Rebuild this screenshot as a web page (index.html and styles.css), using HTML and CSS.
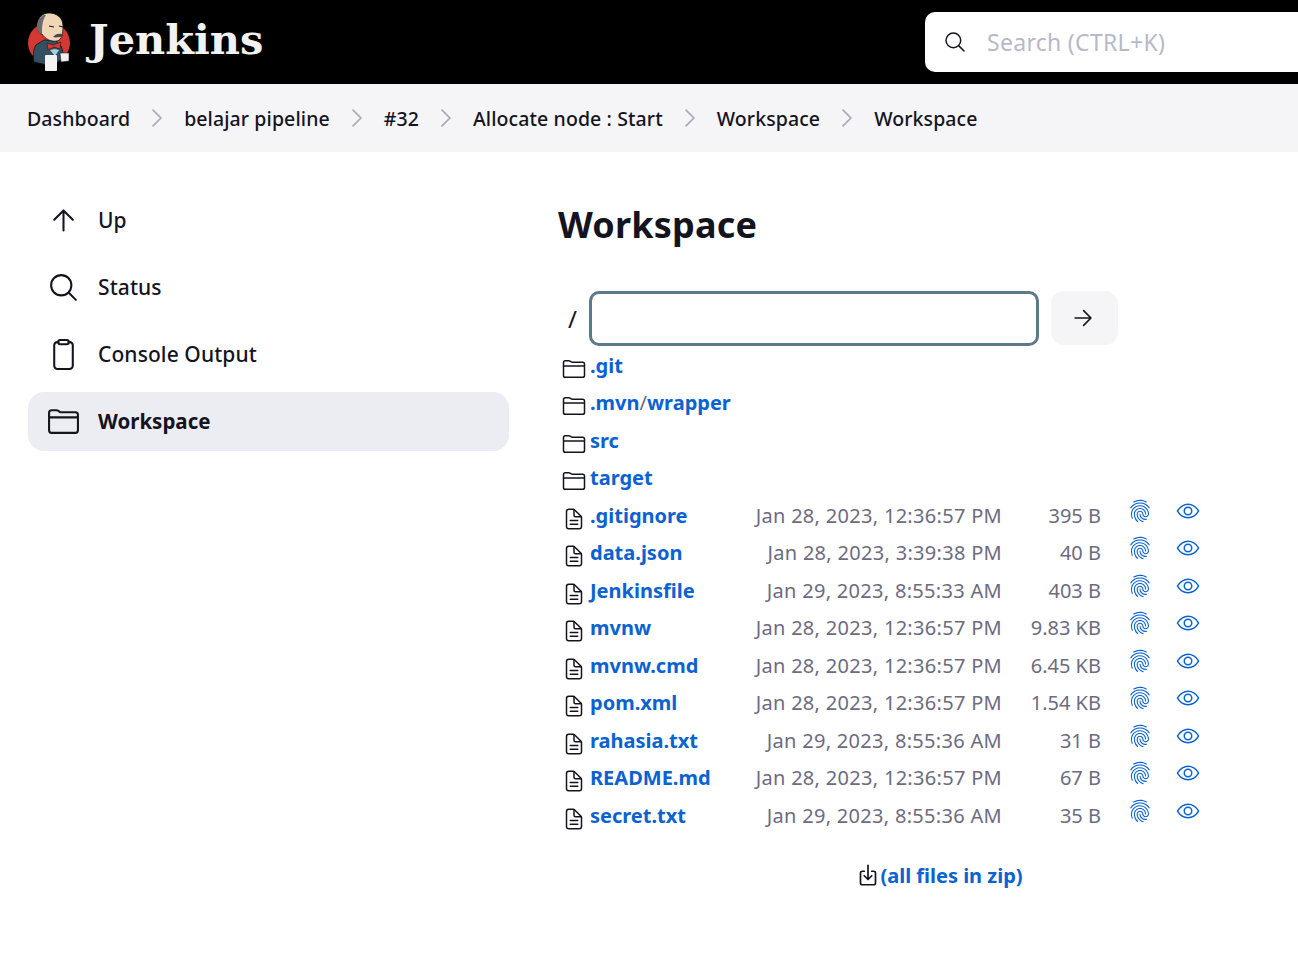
FILE: index.html
```html
<!DOCTYPE html>
<html lang="en">
<head>
    <meta charset="UTF-8">
    <meta name="viewport" content="width=device-width, initial-scale=1.0">
    <link rel="stylesheet" href="styles.css">
    <title>Workspace [Jenkins]</title>
</head>
<body>
    <svg class="sprite" xmlns="http://www.w3.org/2000/svg">
        <symbol id="i-folder" viewBox="0 0 512 512"><path d="M440 432H72a40 40 0 01-40-40V120a40 40 0 0140-40h75.89a40 40 0 0122.19 6.72l27.84 18.56a40 40 0 0022.19 6.72H440a40 40 0 0140 40v240a40 40 0 01-40 40zM32 192h448"/></symbol>
        <symbol id="i-doc" viewBox="0 0 512 512"><path d="M416 221.25V416a48 48 0 01-48 48H144a48 48 0 01-48-48V96a48 48 0 0148-48h98.75a32 32 0 0122.62 9.37l141.26 141.26a32 32 0 019.37 22.62z"/><path d="M256 56v120a32 32 0 0032 32h120M176 288h160M176 368h160"/></symbol>
        <symbol id="i-up" viewBox="0 0 512 512"><path d="M112 244l144-144 144 144M256 120v292"/></symbol>
        <symbol id="i-forward" viewBox="0 0 512 512"><path d="M268 112l144 144-144 144M392 256H100"/></symbol>
        <symbol id="i-search" viewBox="0 0 512 512"><path d="M221.09 64a157.09 157.09 0 10157.09 157.09A157.1 157.1 0 00221.09 64z"/><path d="M338.29 338.29L448 448"/></symbol>
        <symbol id="i-chevron" viewBox="0 0 512 512"><path d="M184 112l144 144-144 144"/></symbol>
        <symbol id="i-clipboard" viewBox="0 0 512 512"><path d="M336 64h16a48 48 0 0148 48v320a48 48 0 01-48 48H160a48 48 0 01-48-48V112a48 48 0 0148-48h16"/><rect x="176" y="32" width="160" height="64" rx="26"/></symbol>
        <symbol id="i-download" viewBox="0 0 512 512"><path d="M336 176h40a40 40 0 0140 40v208a40 40 0 01-40 40H136a40 40 0 01-40-40V216a40 40 0 0140-40h40"/><path d="M176 272l80 80 80-80M256 48v288"/></symbol>
        <symbol id="i-eye" viewBox="0 0 512 512"><path d="M255.66 112c-77.94 0-157.89 45.11-220.83 135.33a16 16 0 00-.27 17.77C82.92 340.8 161.8 400 255.66 400c92.84 0 173.34-59.38 221.79-135.25a16.14 16.14 0 000-17.47C428.89 172.28 347.8 112 255.66 112z"/><circle cx="256" cy="256" r="80"/></symbol>
        <symbol id="i-finger" viewBox="0 0 512 512"><path class="solid" d="M390.42 75.28a10.45 10.45 0 01-5.32-1.44C340.72 50.08 302.35 40 256.35 40c-45.77 0-89.23 11.28-128.76 33.84C122 77 115.11 74.8 111.87 69a12.4 12.4 0 014.63-16.32A281.81 281.81 0 01256.35 16c49.23 0 92.23 11.28 139.39 36.48a12 12 0 014.85 16.08 11.3 11.3 0 01-10.17 6.72zm-330.79 126a11.73 11.73 0 01-6.7-2.16 12.26 12.26 0 01-2.78-16.8c22.89-33.6 52-60 86.69-78.48 72.58-38.84 165.51-39.12 238.32-.24 34.68 18.48 63.8 44.64 86.69 78a12.29 12.29 0 01-2.78 16.8 11.26 11.26 0 01-16.18-2.88c-20.8-30.24-47.15-54-78.36-70.56-66.34-35.28-151.18-35.28-217.29.24-31.44 16.8-57.79 40.8-78.6 71a10 10 0 01-9.01 4.08zM204.1 491a10.66 10.66 0 01-8.09-3.6C175.9 466.48 165 453 149.55 424c-16-29.52-24.27-65.52-24.27-104.16 0-71.28 58.71-129.36 130.84-129.36S387 248.56 387 319.84a11.56 11.56 0 11-23.11 0c0-58.08-48.32-105.36-107.72-105.36S148.4 261.76 148.4 319.84c0 34.56 7.39 66.48 21.49 92.4 14.8 27.6 25 39.36 42.77 58.08a12.67 12.67 0 010 17 12.44 12.44 0 01-8.56 3.68zm165.75-44.4c-27.51 0-51.78-7.2-71.66-21.36a129.1 129.1 0 01-55-105.36 11.57 11.57 0 1123.12 0 104.28 104.28 0 0044.84 85.44c16.41 11.52 35.6 17 58.72 17a147.41 147.41 0 0024-2.4c6.24-1.2 12.25 3.12 13.4 9.84a11.92 11.92 0 01-9.47 13.92 152.28 152.28 0 01-27.95 2.88zM323.38 496a13 13 0 01-3-.48c-36.76-10.56-60.8-24.72-86-50.4-32.37-33.36-50.16-77.76-50.16-125.28 0-38.88 32.36-70.56 72.25-70.56s72.24 31.68 72.24 70.56c0 25.68 21.57 46.56 48.08 46.56s48.08-20.88 48.08-46.56c0-90.48-76.27-163.92-170.12-163.92-66.57 0-127.58 38.4-155.09 97.92-9.24 19.68-13.87 42.48-13.87 67.44 0 18.72 1.62 48.24 15.59 86.64 2.32 6.24-.69 13.2-6.7 15.36a11.34 11.34 0 01-14.8-7 266.76 266.76 0 01-17-95c0-28.8 5.32-55 15.86-77.76 31.43-67.44 100.58-111.12 176.09-111.12 106.82 0 193.24 84.24 193.24 187.92 0 38.88-32.36 70.56-72.24 70.56s-72.25-31.68-72.25-70.56c0-25.68-21.57-46.56-48.08-46.56s-48.08 20.88-48.08 46.56c0 41 15.37 79.44 43.46 108.24 22.19 22.8 43.46 35.28 76.28 44.64 6.24 1.68 9.71 8.4 8.09 14.64A11.39 11.39 0 01323.38 496z"/></symbol>
    </svg>

    <header class="top-bar">
        <a class="brand" href="#">
            <svg class="mascot" viewBox="0 0 60 72" xmlns="http://www.w3.org/2000/svg">
                <ellipse cx="29" cy="37" rx="21" ry="20.500" fill="#d33833"/>
                <path d="M14 56c-1-6-1-13 2-17l8-5 12 1 5 5c2 4 2 9 1 13l-6 4-9 2z" fill="#335061" stroke="#111" stroke-width=".8"/>
                <path d="M18 18C18 11 23 7 29 7c8 0 14 5 14 13 0 7-1 14-6 15-6 1-12-2-15-7-3 0-5-4-4-10z" fill="#f0d6b7" stroke="#111" stroke-width=".8"/>
                <path d="M24 9c-4 2-7 6-7 11 0 4 2 7 5 8 0-7 0-13 4-19z" fill="#6d6b6d"/>
                <path d="M29 20l5 1M39 20l4 1" stroke="#111" stroke-width="1" fill="none"/>
                <path d="M33 31c2-3 6-4 9-3 1 2 0 3-2 3-2 0-4 1-7 0z" fill="#49484c"/>
                <path d="M27 37l6 2 8-3-1 7-6-2-6 3z" fill="#d33833" stroke="#111" stroke-width=".5"/>
                <path d="M30 44l5-1 4 1-4 6z" fill="#a9d0df"/>
                <rect x="25" y="49" width="12" height="16" rx="1" fill="#f2f2f2"/>
                <path d="M40 47h9v8l-8 1z" fill="#f2f2f2" stroke="#222" stroke-width=".6"/>
            </svg>
            <span class="brand-name">Jenkins</span>
        </a>
        <div class="search-box">
            <svg class="icon search-icon"><use href="#i-search"/></svg>
            <span class="search-text">Search (CTRL+K)</span>
        </div>
    </header>

    <nav class="breadcrumbs">
        <a href="#">Dashboard</a>
        <svg class="icon crumb-sep"><use href="#i-chevron"/></svg>
        <a href="#">belajar pipeline</a>
        <svg class="icon crumb-sep"><use href="#i-chevron"/></svg>
        <a href="#">#32</a>
        <svg class="icon crumb-sep"><use href="#i-chevron"/></svg>
        <a href="#">Allocate node : Start</a>
        <svg class="icon crumb-sep"><use href="#i-chevron"/></svg>
        <a href="#">Workspace</a>
        <svg class="icon crumb-sep"><use href="#i-chevron"/></svg>
        <a href="#">Workspace</a>
    </nav>

    <div class="page">
        <aside class="side-menu">
            <a class="side-item" href="#"><svg class="icon side-icon"><use href="#i-up"/></svg>Up</a>
            <a class="side-item" href="#"><svg class="icon side-icon"><use href="#i-search"/></svg>Status</a>
            <a class="side-item" href="#"><svg class="icon side-icon"><use href="#i-clipboard"/></svg>Console Output</a>
            <a class="side-item active" href="#"><svg class="icon side-icon"><use href="#i-folder"/></svg>Workspace</a>
        </aside>

        <main class="content">
            <h1>Workspace</h1>

            <form class="path-row">
                <span class="path-slash">/</span>
                <input class="path-input" type="text">
                <button class="path-go" type="button"><svg class="icon"><use href="#i-forward"/></svg></button>
            </form>

            <div class="file-list">
                <div class="file-row"><span class="file-name"><svg class="icon file-icon folder"><use href="#i-folder"/></svg><a href="#">.git</a></span></div>
                <div class="file-row"><span class="file-name"><svg class="icon file-icon folder"><use href="#i-folder"/></svg><a href="#">.mvn</a><span class="dir-sep">/</span><a href="#">wrapper</a></span></div>
                <div class="file-row"><span class="file-name"><svg class="icon file-icon folder"><use href="#i-folder"/></svg><a href="#">src</a></span></div>
                <div class="file-row"><span class="file-name"><svg class="icon file-icon folder"><use href="#i-folder"/></svg><a href="#">target</a></span></div>

                <div class="file-row">
                    <span class="file-name"><svg class="icon file-icon"><use href="#i-doc"/></svg><a href="#">.gitignore</a></span>
                    <span class="file-date">Jan 28, 2023, 12:36:57 PM</span><span class="file-size">395 B</span>
                    <svg class="act finger"><use href="#i-finger"/></svg><svg class="icon act eye"><use href="#i-eye"/></svg>
                </div>
                <div class="file-row">
                    <span class="file-name"><svg class="icon file-icon"><use href="#i-doc"/></svg><a href="#">data.json</a></span>
                    <span class="file-date">Jan 28, 2023, 3:39:38 PM</span><span class="file-size">40 B</span>
                    <svg class="act finger"><use href="#i-finger"/></svg><svg class="icon act eye"><use href="#i-eye"/></svg>
                </div>
                <div class="file-row">
                    <span class="file-name"><svg class="icon file-icon"><use href="#i-doc"/></svg><a href="#">Jenkinsfile</a></span>
                    <span class="file-date">Jan 29, 2023, 8:55:33 AM</span><span class="file-size">403 B</span>
                    <svg class="act finger"><use href="#i-finger"/></svg><svg class="icon act eye"><use href="#i-eye"/></svg>
                </div>
                <div class="file-row">
                    <span class="file-name"><svg class="icon file-icon"><use href="#i-doc"/></svg><a href="#">mvnw</a></span>
                    <span class="file-date">Jan 28, 2023, 12:36:57 PM</span><span class="file-size">9.83 KB</span>
                    <svg class="act finger"><use href="#i-finger"/></svg><svg class="icon act eye"><use href="#i-eye"/></svg>
                </div>
                <div class="file-row">
                    <span class="file-name"><svg class="icon file-icon"><use href="#i-doc"/></svg><a href="#">mvnw.cmd</a></span>
                    <span class="file-date">Jan 28, 2023, 12:36:57 PM</span><span class="file-size">6.45 KB</span>
                    <svg class="act finger"><use href="#i-finger"/></svg><svg class="icon act eye"><use href="#i-eye"/></svg>
                </div>
                <div class="file-row">
                    <span class="file-name"><svg class="icon file-icon"><use href="#i-doc"/></svg><a href="#">pom.xml</a></span>
                    <span class="file-date">Jan 28, 2023, 12:36:57 PM</span><span class="file-size">1.54 KB</span>
                    <svg class="act finger"><use href="#i-finger"/></svg><svg class="icon act eye"><use href="#i-eye"/></svg>
                </div>
                <div class="file-row">
                    <span class="file-name"><svg class="icon file-icon"><use href="#i-doc"/></svg><a href="#">rahasia.txt</a></span>
                    <span class="file-date">Jan 29, 2023, 8:55:36 AM</span><span class="file-size">31 B</span>
                    <svg class="act finger"><use href="#i-finger"/></svg><svg class="icon act eye"><use href="#i-eye"/></svg>
                </div>
                <div class="file-row">
                    <span class="file-name"><svg class="icon file-icon"><use href="#i-doc"/></svg><a href="#">README.md</a></span>
                    <span class="file-date">Jan 28, 2023, 12:36:57 PM</span><span class="file-size">67 B</span>
                    <svg class="act finger"><use href="#i-finger"/></svg><svg class="icon act eye"><use href="#i-eye"/></svg>
                </div>
                <div class="file-row">
                    <span class="file-name"><svg class="icon file-icon"><use href="#i-doc"/></svg><a href="#">secret.txt</a></span>
                    <span class="file-date">Jan 29, 2023, 8:55:36 AM</span><span class="file-size">35 B</span>
                    <svg class="act finger"><use href="#i-finger"/></svg><svg class="icon act eye"><use href="#i-eye"/></svg>
                </div>
            </div>

            <div class="zip-row">
                <svg class="icon zip-icon"><use href="#i-download"/></svg><a href="#">(all files in zip)</a>
            </div>
        </main>
    </div>
</body>
</html>
```

FILE: styles.css
```css
body {
    margin: 0;
    font-family: "Noto Sans", sans-serif;
    color: #14141f;
    background-color: #fff;
    overflow-x: hidden;
}

a {
    color: inherit;
    text-decoration: none;
}

.sprite {
    display: none;
}

.icon {
    fill: none;
    stroke: currentColor;
    stroke-width: 32;
    stroke-linecap: round;
    stroke-linejoin: round;
}

/* top bar */
.top-bar {
    display: flex;
    align-items: center;
    justify-content: space-between;
    height: 84px;
    background-color: #000;
}

.brand {
    display: flex;
    align-items: center;
    gap: 9px;
    padding-left: 20px;
}

.mascot {
    width: 60px;
    height: 72px;
}

.brand-name {
    padding-bottom: 6px;
    font-family: "DejaVu Serif", serif;
    font-weight: bold;
    font-size: 41.5px;
    color: #f2f2f2;
}

.search-box {
    display: flex;
    align-items: center;
    gap: 20px;
    width: 373px;
    height: 60px;
    box-sizing: border-box;
    padding-left: 18px;
    background-color: #fff;
    border-radius: 10px 0 0 10px;
}

.search-icon {
    width: 24px;
    height: 24px;
    color: #14141f;
}

.search-text {
    font-size: 23px;
    letter-spacing: 0.3px;
    color: #b9b8c6;
}

/* breadcrumbs */
.breadcrumbs {
    display: flex;
    align-items: center;
    gap: 13px;
    height: 68px;
    padding-left: 27px;
    background-color: #f5f5f7;
    font-size: 19.5px;
    letter-spacing: 0.1px;
    font-weight: 500;
}

.crumb-sep {
    width: 28px;
    height: 28px;
    color: #a9a9ba;
}

/* page columns */
.page {
    display: grid;
    grid-template-columns: 481px 1fr;
    column-gap: 49px;
    padding: 39px 0 0 28px;
}

.side-menu {
    display: flex;
    flex-direction: column;
    gap: 8px;
}

.side-item {
    display: flex;
    align-items: center;
    gap: 18px;
    height: 59px;
    box-sizing: border-box;
    padding: 0 0 1px 19px;
    border-radius: 16px;
    font-size: 21px;
    letter-spacing: 0.1px;
    font-weight: 500;
}

.side-item.active {
    background-color: #ecedf2;
    font-size: 20.5px;
    letter-spacing: 0;
    font-weight: 700;
}

.side-icon {
    width: 33px;
    height: 33px;
    margin-top: 1px;
}

/* workspace */
h1 {
    margin: 9px 0 0;
    font-size: 36px;
    line-height: 50px;
    letter-spacing: 0.2px;
    font-weight: 700;
}

.path-row {
    display: flex;
    align-items: flex-start;
    margin-top: 41px;
    height: 55px;
}

.path-slash {
    width: 31px;
    padding: 11px 0 0 10px;
    box-sizing: border-box;
    font-size: 24px;
}

.path-input {
    width: 450px;
    height: 55px;
    box-sizing: border-box;
    border: 3px solid #5d7888;
    border-radius: 10px;
    outline: none;
    background-color: #fff;
}

.path-go {
    display: flex;
    align-items: center;
    justify-content: center;
    width: 67px;
    height: 54px;
    margin-left: 12px;
    padding: 0 3px 0 0;
    border: none;
    border-radius: 13px;
    background-color: #f5f5f7;
    color: #14141f;
}

.path-go .icon {
    width: 26px;
    height: 26px;
}

.file-list {
    margin-top: 0.5px;
}

.file-row {
    display: grid;
    grid-template-columns: 192px 252px 99px 51px 48px 1fr;
    grid-template-rows: 37.5px;
    align-items: center;
    font-size: 20px;
}

.file-name {
    display: flex;
    align-items: center;
    white-space: nowrap;
    padding-left: 4px;
    color: #0b62d1;
    font-weight: 700;
}

.file-name a:first-of-type {
    margin-left: 4px;
}

.dir-sep {
    color: #6d6b7f;
    font-weight: 400;
}

.file-icon {
    width: 24px;
    height: 24px;
    margin-top: 7px;
    color: #14141f;
}

.file-date {
    grid-column: 2;
    text-align: right;
    letter-spacing: 0.3px;
    color: #6d6b7f;
}

.file-size {
    grid-column: 3;
    text-align: right;
    color: #6d6b7f;
}

.act {
    color: #0b62d1;
    margin-top: -9px;
    width: 24px;
    height: 24px;
}

.finger {
    grid-column: 4;
    margin-left: 27px;
    fill: currentColor;
}

.eye {
    grid-column: 5;
    margin-left: 24px;
}

.zip-row {
    display: flex;
    align-items: center;
    justify-content: center;
    width: 763px;
    margin-top: 27.5px;
    font-size: 20px;
    font-weight: 700;
    color: #0b62d1;
}

.zip-icon {
    width: 24px;
    height: 24px;
    stroke-width: 36;
    color: #14141f;
}
```
